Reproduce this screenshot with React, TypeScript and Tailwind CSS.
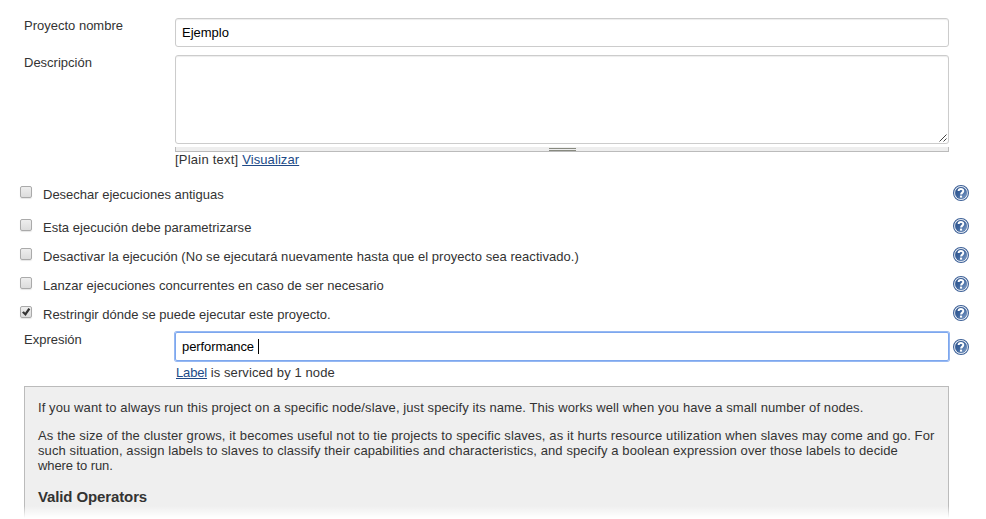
import type { ReactNode } from "react";

function HelpIcon() {
  return (
    <svg width="16" height="16" viewBox="0 0 16 16" className="block shrink-0">
      <defs>
        <linearGradient id="help-fill" x1="0" y1="0" x2="1" y2="1">
          <stop offset="0" stopColor="#2b5189" />
          <stop offset="0.5" stopColor="#3d659e" />
          <stop offset="1" stopColor="#8fabd0" />
        </linearGradient>
      </defs>
      <circle cx="8" cy="8" r="7.45" fill="#fff" stroke="#3d6198" strokeWidth="1.1" />
      <circle cx="8" cy="8" r="5.9" fill="url(#help-fill)" stroke="#365c95" strokeWidth="0.4" />
      <path d="M5.6 6.1C5.6 3.2 10.4 3.3 10.3 6C10.3 7.6 8.1 7.7 8.1 9.6" fill="none" stroke="#fff" strokeWidth="2" />
      <rect x="7" y="10.6" width="2.1" height="2" fill="#fff" />
    </svg>
  );
}

function CheckBox({ checked = false }: { checked?: boolean }) {
  return (
    <span className="block h-3 w-3 shrink-0 rounded-[2px] border border-[#aaa] bg-linear-to-b from-[#eee] to-[#dcdcdc] shadow-[0_1px_1px_#0000001a]">
      {checked && (
        <svg width="10" height="10" viewBox="0 0 10 10" className="block">
          <path d="M1 5.6L2.9 4.3L4.1 5.7L7.4 1L9.3 2.2L4.6 9Z" fill="#333" />
        </svg>
      )}
    </span>
  );
}

function Option({ children, className, spacing, checked }: { children: ReactNode; className: string; spacing: string; checked?: boolean }) {
  return (
    <div className={`flex items-start pl-5 pr-[17px] ${className}`}>
      <div className="pt-px">
        <CheckBox checked={checked} />
      </div>
      <span className={`ml-[11px] mt-[2px] grow whitespace-nowrap ${spacing}`}>{children}</span>
      <HelpIcon />
    </div>
  );
}

export default function App() {
  return (
    <div className="h-[519px] w-[986px] overflow-hidden bg-white font-['Liberation_Sans',Arial,sans-serif] text-[13px] leading-[15px] text-[#333]">
      <div className="flex h-[55px] pl-6 pt-[18px]">
        <span className="w-[151px]">Proyecto nombre</span>
        <div className="flex h-[29px] w-[774px] rounded-[3px] border border-[#ccc] pl-[6px] pt-[6px] text-black shadow-[inset_0_1px_1px_#00000013]">Ejemplo</div>
      </div>
      <div className="flex h-[130px] pl-6">
        <span className="w-[151px]">Descripción</span>
        <div className="w-[774px]">
          <div className="flex h-[89px] items-end justify-end rounded-[3px] border border-[#ccc] shadow-[inset_0_1px_1px_#00000013]">
            <svg width="9" height="9" viewBox="0 0 9 9" className="block">
              <path d="M0.5 7.5L7.5 .5M4.5 7.5L7.5 4.5" stroke="#444" strokeWidth="1" />
            </svg>
          </div>
          <div className="mt-[3px] flex h-[5px] justify-center border-x border-b border-[#bbb] bg-[#eee]">
            <span className="mt-px block h-[3px] w-[27px] border-y border-[#888a80]" />
          </div>
          <div>
            <span className="tracking-[0.22px]">[Plain text] </span>
            <span className="tracking-[0.09px] text-[#204a87] underline">Visualizar</span>
          </div>
        </div>
      </div>
      <Option className="h-[33px]" spacing="tracking-normal">Desechar ejecuciones antiguas</Option>
      <Option className="h-[29px]" spacing="tracking-[0.03px]">Esta ejecución debe parametrizarse</Option>
      <Option className="h-[29px]" spacing="tracking-[0.045px]">Desactivar la ejecución (No se ejecutará nuevamente hasta que el proyecto sea reactivado.)</Option>
      <Option className="h-[29px]" spacing="tracking-[0.02px]">Lanzar ejecuciones concurrentes en caso de ser necesario</Option>
      <Option className="h-[27px]" spacing="tracking-normal" checked>Restringir dónde se puede ejecutar este proyecto.</Option>
      <div className="flex h-[54px] pl-6">
        <span className="w-[151px]">Expresión</span>
        <div className="w-[774px]">
          <div className="flex h-[29px] rounded-[2px] border border-[#7da7ee] pl-[6px] pt-[6px] text-black shadow-[0_0_0_1px_#96b8f2]">
            <span className="tracking-[-0.09px]">performance</span>
            <span className="ml-1 block h-[15px] w-px bg-black" />
          </div>
          <div className="pl-px pt-1 tracking-[0.09px]">
            <span className="tracking-[-0.15px] text-[#204a87] underline">Label</span> is serviced by 1 node
          </div>
        </div>
        <div className="ml-1 pt-[7px]">
          <HelpIcon />
        </div>
      </div>
      <div className="ml-6 h-[133px] w-[925px] border-x border-t border-[#bbb] bg-[#efefef] pl-[13px] pt-[13px]">
        <p className="whitespace-nowrap tracking-[0.095px]">If you want to always run this project on a specific node/slave, just specify its name. This works well when you have a small number of nodes.</p>
        <p className="mt-[13px] whitespace-nowrap">
          <span className="block tracking-[0.123px]">As the size of the cluster grows, it becomes useful not to tie projects to specific slaves, as it hurts resource utilization when slaves may come and go. For</span>
          <span className="block tracking-[0.1px]">such situation, assign labels to slaves to classify their capabilities and characteristics, and specify a boolean expression over those labels to decide</span>
          <span className="block tracking-[-0.09px]">where to run.</span>
        </p>
        <h3 className="mt-[15px] text-[15px] font-bold leading-[18px] tracking-[-0.12px]">Valid Operators</h3>
        <div className="relative -ml-[14px] h-[12px] w-[925px] bg-linear-to-b from-white/0 to-white" />
        <div className="relative -ml-[14px] h-[3px] w-[925px] bg-white" />
      </div>
    </div>
  );
}
